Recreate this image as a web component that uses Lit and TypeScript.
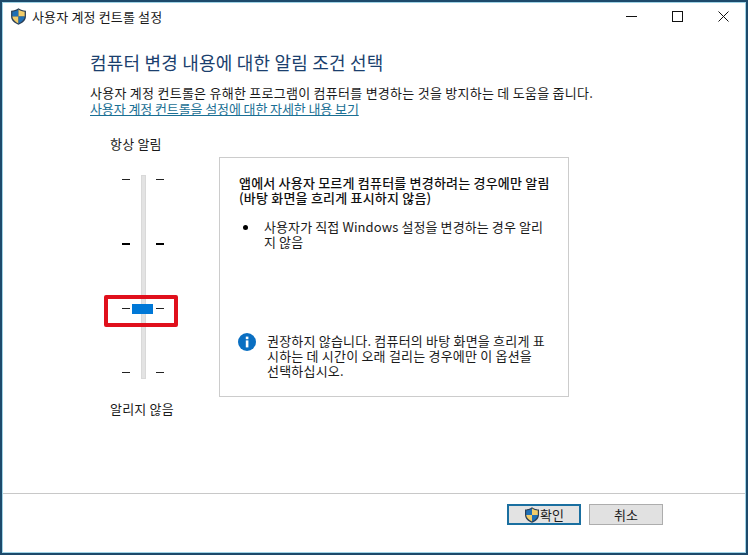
import { LitElement, html, css } from "lit";
import { customElement } from "lit/decorators.js";

const shield = (size: number) => html`<svg class="shield" width=${size} height=${size} viewBox="0 0 16 16">
  <path d="M8 .2 C6 1.7 3.6 2.4 1 2.6 V8 C1 11.8 4.2 14.2 8 15.8 C11.8 14.2 15 11.8 15 8 V2.6 C12.4 2.4 10 1.7 8 .2Z" fill="#2b3f55"/>
  <path d="M8 1.5 C6.2 2.8 4.2 3.4 2.2 3.6 V8 H8Z" fill="#1f6fb5"/>
  <path d="M8 1.5 C9.8 2.8 11.8 3.4 13.8 3.6 V8 H8Z" fill="#f2cd6b"/>
  <path d="M2.2 8 C2.4 11 5 13.1 8 14.5 V8Z" fill="#f2cd6b"/>
  <path d="M13.8 8 C13.6 11 11 13.1 8 14.5 V8Z" fill="#1f6fb5"/>
</svg>`;

@customElement("app-root")
export class AppRoot extends LitElement {
  static styles = css`
    :host {
      display: block;
      width: 748px;
      height: 555px;
      font-family: "Noto Sans CJK KR", "Open Sans", sans-serif;
      font-size: 13px;
      color: #1a1a1a;
    }
    * { box-sizing: border-box; }
    .window {
      width: 748px;
      height: 555px;
      display: flex;
      flex-direction: column;
      background: #fff;
      border: 2px solid #1d4a6b;
      border-bottom-width: 3px;
      outline: 1px solid #9fd3e6;
      outline-offset: -3px;
    }
    .titlebar {
      height: 28px;
      display: flex;
      align-items: center;
      padding-left: 8px;
      flex: none;
    }
    .shield { display: block; flex: none; }
    .title { margin-left: 5px; letter-spacing: 0.15px; }
    .winbtns { margin-left: auto; display: flex; }
    .winbtn { width: 46px; height: 28px; display: flex; align-items: center; justify-content: center; }
    .body { flex: 1; padding: 20px 0 0 88px; display: flex; flex-direction: column; }
    h1 {
      margin: 0;
      font-size: 18px;
      font-weight: 400;
      line-height: 24px;
      color: #1b3f6e;
      letter-spacing: 0.2px;
    }
    .desc { margin: 11px 0 0; line-height: 16px; letter-spacing: 0.26px; white-space: nowrap; }
    .link { display: block; color: #1a6f94; text-decoration: underline; letter-spacing: -0.1px; line-height: 16px; white-space: nowrap; }
    .main { display: flex; margin-top: 19px; }
    .left { width: 129px; display: flex; flex-direction: column; flex: none; }
    .lab { line-height: 16px; white-space: nowrap; letter-spacing: 0.2px; margin-left: 20px; }
    .lab.bot { margin-top: 22px; }
    .slider { position: relative; width: 129px; height: 204px; margin-top: 23px; }
    .track { position: absolute; left: 51px; top: 0; width: 5px; height: 204px; background: #e3e3e3; border: 1px solid #d9d9d9; }
    .tick { position: absolute; width: 8px; height: 1px; background: #222; }
    .tick.bold { height: 2px; background: #000; }
    .thumb { position: absolute; left: 42px; top: 129px; width: 21px; height: 10px; background: #0078d7; }
    .mark { position: absolute; left: 14px; top: 120px; width: 74px; height: 32px; border: 4px solid #e0101c; border-radius: 2px; }
    .panel {
      width: 350px;
      height: 240px;
      border: 1px solid #cccccc;
      padding: 17px 19px 0;
      margin-top: 21px;
      display: flex;
      flex-direction: column;
    }
    .head { font-weight: 500; line-height: 15px; letter-spacing: 0.2px; white-space: nowrap; color: #111; }
    .bullet { display: flex; margin-top: 14px; line-height: 15px; }
    .dot { width: 5px; height: 5px; border-radius: 50%; background: #000; margin: 6px 0 0 4px; flex: none; }
    .bullet span { margin-left: 16px; white-space: nowrap; letter-spacing: 0.1px; }
    .info { display: flex; margin-top: auto; margin-bottom: 18px; line-height: 15px; margin-left: -1px; }
    .info svg { flex: none; }
    .info span { margin-left: 11px; white-space: nowrap; letter-spacing: 0.2px; }
    .footer {
      height: 59px;
      flex: none;
      border-top: 1px solid #c8c8c8;
      display: flex;
      justify-content: flex-end;
      align-items: flex-start;
      gap: 8px;
      padding: 10px 83px 0 0;
    }
    .btn {
      width: 74px;
      height: 21px;
      font: inherit;
      color: #1a1a1a;
      background: #e1e1e1;
      border: 1px solid #adadad;
      padding: 0;
      display: flex;
      align-items: center;
      justify-content: center;
      line-height: 1;
    }
    .btn.default { border: 2px solid #1a6fa0; background: #e3e3e3; }
  `;

  private tick(x: number, y: number, bold = false) {
    return html`<div class="tick ${bold ? "bold" : ""}" style="left:${x}px;top:${y}px"></div>`;
  }

  render() {
    const ys: [number, boolean][] = [[4, false], [68, true], [133, false], [197, false]];
    return html`<div class="window">
      <div class="titlebar">
        ${shield(17)}
        <div class="title">사용자 계정 컨트롤 설정</div>
        <div class="winbtns">
          <div class="winbtn"><svg width="11" height="11" viewBox="0 0 11 11"><path d="M0 5.5H11" stroke="#111" fill="none"/></svg></div>
          <div class="winbtn"><svg width="11" height="11" viewBox="0 0 11 11"><rect x=".5" y=".5" width="10" height="10" stroke="#111" fill="none"/></svg></div>
          <div class="winbtn"><svg width="11" height="11" viewBox="0 0 11 11"><path d="M.5 .5L10.5 10.5M10.5 .5L.5 10.5" stroke="#111" fill="none"/></svg></div>
        </div>
      </div>
      <div class="body">
        <h1>컴퓨터 변경 내용에 대한 알림 조건 선택</h1>
        <p class="desc">사용자 계정 컨트롤은 유해한 프로그램이 컴퓨터를 변경하는 것을 방지하는 데 도움을 줍니다.</p>
        <a class="link">사용자 계정 컨트롤을 설정에 대한 자세한 내용 보기</a>
        <div class="main">
          <div class="left">
            <div class="lab top">항상 알림</div>
            <div class="slider">
              <div class="track"></div>
              ${ys.map(([y, b]) => html`${this.tick(32, y, b)}${this.tick(66, y, b)}`)}
              <div class="thumb"></div>
              <div class="mark"></div>
            </div>
            <div class="lab bot">알리지 않음</div>
          </div>
          <div class="panel">
            <div class="head">앱에서 사용자 모르게 컴퓨터를 변경하려는 경우에만 알림<br />(바탕 화면을 흐리게 표시하지 않음)</div>
            <div class="bullet"><i class="dot"></i><span>사용자가 직접 Windows 설정을 변경하는 경우 알리<br />지 않음</span></div>
            <div class="info">
              <svg width="18" height="18" viewBox="0 0 18 18">
                <circle cx="9" cy="9" r="9" fill="#0a6fc2"/>
                <rect x="7.8" y="3.6" width="2.6" height="2.6" fill="#fff"/>
                <rect x="7.8" y="7.4" width="2.6" height="7" fill="#fff"/>
              </svg>
              <span>권장하지 않습니다. 컴퓨터의 바탕 화면을 흐리게 표<br />시하는 데 시간이 오래 걸리는 경우에만 이 옵션을<br />선택하십시오.</span>
            </div>
          </div>
        </div>
      </div>
      <div class="footer">
        <button class="btn default">${shield(16)}확인</button>
        <button class="btn">취소</button>
      </div>
    </div>`;
  }
}
